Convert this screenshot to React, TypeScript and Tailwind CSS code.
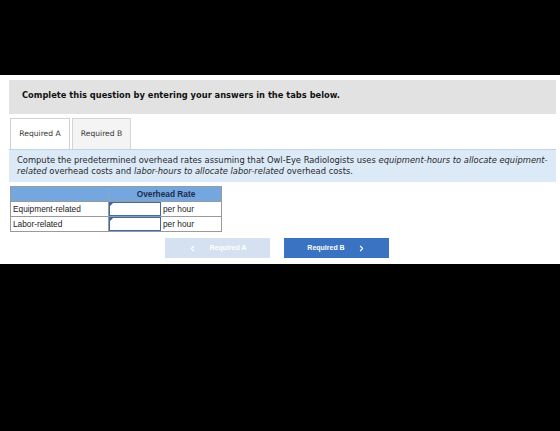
import { ChevronLeft, ChevronRight } from 'lucide-react'

const verdana = "font-['DejaVu_Sans',Verdana,sans-serif]"
const arial = "font-['Liberation_Sans',Arial,sans-serif]"

function RateRow({ label }: { label: string }) {
  return (
    <div className="grid grid-cols-[98px_52px_62px] h-[15px] border-b border-[#9a9a9a]">
      <div className="border-r border-[#9a9a9a] pl-[2px] text-[8.3px] leading-[14px] text-[#222]">{label}</div>
      <div className="relative border border-[#3e6aa8] bg-white">
        <span className="absolute left-0 top-0 w-0 h-0 border-t-[3px] border-r-[3px] border-t-[#2f5fb0] border-r-transparent" />
      </div>
      <div className="pl-[2px] text-[8.3px] leading-[14px] text-[#222]">per hour</div>
    </div>
  )
}

export default function App() {
  return (
    <div className="w-[560px] h-[431px] bg-black flex flex-col">
      <div className="h-[75px] shrink-0" />
      <div className="h-[189px] bg-white pt-[5px] pl-[9px] pr-[4px]">
        <div className={`${verdana} h-[34px] bg-[#e2e2e2] flex items-center pl-[13px] pb-[4px] text-[8.3px] font-bold text-[#111]`}>
          Complete this question by entering your answers in the tabs below.
        </div>

        <div className={`${verdana} flex gap-[2px] mt-[4px] pl-[1px] h-[31px] items-end`}>
          <div className="w-[60px] h-[31px] bg-white border border-b-0 border-[#cfcfcf] flex items-center justify-center text-[7.6px] text-[#333]">
            Required A
          </div>
          <div className="w-[59px] h-[31px] bg-[#f4f4f4] border border-b-0 border-[#d4d4d4] flex items-center justify-center text-[7.6px] text-[#333]">
            Required B
          </div>
        </div>

        <div className={`${verdana} h-[33px] bg-[#dce9f7] border-t border-[#c3d3e4] pl-[8px] pt-[5px] text-[8.35px] leading-[11px] text-[#2a2a2a]`}>
          Compute the predetermined overhead rates assuming that Owl-Eye Radiologists uses <i>equipment-hours to allocate equipment-</i>
          <br />
          <i>related</i> overhead costs and <i>labor-hours to allocate labor-related</i> overhead costs.
        </div>

        <div className={`${arial} mt-[4px] ml-[1px] w-[212px] border-l border-r border-t border-[#9a9a9a]`}>
          <div className="grid grid-cols-[98px_114px] h-[15px] bg-[#74a6e0] border-b border-[#9a9a9a]">
            <div className="border-r border-[#8aa6c8]" />
            <div className="text-center text-[8.3px] font-bold leading-[14px] text-[#1c2d4a]">Overhead Rate</div>
          </div>
          <RateRow label="Equipment-related" />
          <RateRow label="Labor-related" />
        </div>

        <div className={`${arial} flex gap-[14px] mt-[6px] ml-[156px]`}>
          <div className="w-[105px] h-[20px] bg-[#d5e1f0] flex items-center justify-center gap-[12px] text-[7px] font-bold text-white">
            <ChevronLeft size={9} strokeWidth={3} />
            <span>Required A</span>
          </div>
          <div className="w-[105px] h-[20px] bg-[#3a73c2] flex items-center justify-center gap-[12px] text-[7px] font-bold text-white">
            <span>Required B</span>
            <ChevronRight size={9} strokeWidth={3} />
          </div>
        </div>
      </div>
    </div>
  )
}
